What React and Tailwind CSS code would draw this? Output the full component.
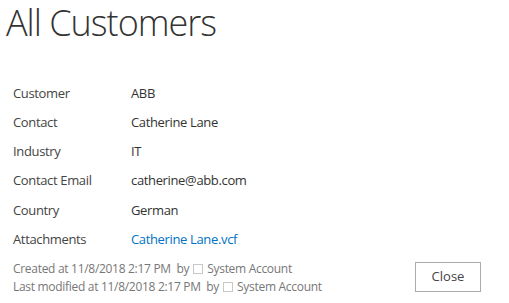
import React from "react";

const fields = [
  { label: "Customer", value: "ABB" },
  { label: "Contact", value: "Catherine Lane" },
  { label: "Industry", value: "IT" },
  { label: "Contact Email", value: "catherine@abb.com" },
  { label: "Country", value: "German" },
  { label: "Attachments", value: "Catherine Lane.vcf", link: true },
];

function Presence() {
  return <span className="inline-block w-[10px] h-[10px] border border-[#c8c8c8] bg-white mx-[4px] align-[-1px]" />;
}

export default function App() {
  return (
    <div className="w-[509px] h-[303px] bg-white overflow-hidden font-['Open_Sans',sans-serif] text-[#444]">
      <h1 className="-mt-[2px] pl-[6px] text-[36px] leading-[50px] font-light text-[#333] tracking-[-1px]">
        All Customers
      </h1>

      <div className="mt-[31px] pl-[13px]">
        {fields.map((f) => (
          <div key={f.label} className="flex h-[29.2px] items-center text-[13px] tracking-[-0.35px]">
            <div className="w-[118px] text-[#444]">{f.label}</div>
            <div className={f.link ? "text-[#0072c6]" : "text-[#333]"}>{f.value}</div>
          </div>
        ))}
      </div>

      <div className="mt-[6px] pl-[13px] pr-[28px] flex items-start justify-between">
        <div className="text-[12px] leading-[18px] text-[#777] tracking-[-0.3px]">
          <div>
            Created at 11/8/2018 2:17 PM&nbsp; by<Presence />System Account
          </div>
          <div>
            Last modified at 11/8/2018 2:17 PM&nbsp; by<Presence />System Account
          </div>
        </div>
        <button className="mt-[2px] w-[66px] h-[30px] border border-[#ababab] bg-white text-[13px] text-[#444]">
          Close
        </button>
      </div>
    </div>
  );
}
